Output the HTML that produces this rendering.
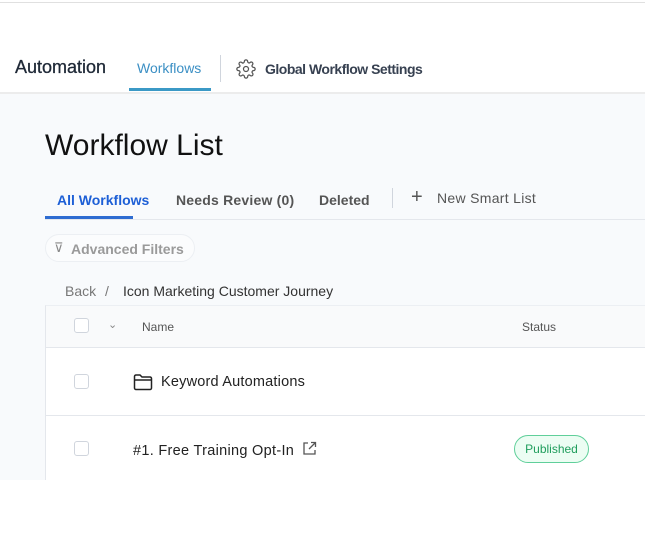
<!DOCTYPE html>
<html><head><style>
*{margin:0;padding:0;box-sizing:border-box}
body{width:645px;height:555px;background:#fff;font-family:"Liberation Sans",sans-serif;position:relative;overflow:hidden}
.a{position:absolute;white-space:nowrap}
.cb{position:absolute;width:15px;height:15px;border:1px solid #d0d5dd;border-radius:3px;background:#fff}
</style></head><body>
<div class="a" style="left:0;top:2px;width:645px;height:1px;background:#e0e0e0"></div>
<div class="a" style="left:0;top:93px;width:645px;height:387px;background:#f8fafc"></div>
<div class="a" style="left:0;top:92px;width:645px;height:2px;background:#ececec"></div>
<div class="a" style="left:15px;top:57px;font-size:18px;color:#1f2937;-webkit-text-stroke:0.3px #1f2937">Automation</div>
<div class="a" style="left:137px;top:60px;font-size:14px;color:#3b8fc4">Workflows</div>
<div class="a" style="left:129px;top:88px;width:82px;height:3px;background:#3b99c6"></div>
<div class="a" style="left:220px;top:55px;width:1px;height:27px;background:#d0d5dd"></div>
<svg class="a" style="left:236px;top:59px" width="20" height="20" viewBox="0 0 24 24" fill="none" stroke="#555" stroke-width="1.5"><circle cx="12" cy="12" r="3"/><path d="M19.4 15a1.65 1.65 0 0 0 .33 1.820l.06.06a2 2 0 1 1-2.830 2.830l-.06-.06a1.65 1.65 0 0 0-1.820-.33 1.65 1.65 0 0 0-1 1.510V21a2 2 0 1 1-4 0v-.09A1.65 1.65 0 0 0 9 19.4a1.65 1.65 0 0 0-1.820.33l-.06.06a2 2 0 1 1-2.830-2.830l.06-.06A1.65 1.65 0 0 0 4.680 15a1.65 1.65 0 0 0-1.510-1H3a2 2 0 1 1 0-4h.09A1.65 1.65 0 0 0 4.6 9a1.65 1.65 0 0 0-.33-1.820l-.06-.06a2 2 0 1 1 2.830-2.830l.06.06A1.65 1.65 0 0 0 9 4.680a1.65 1.65 0 0 0 1-1.510V3a2 2 0 1 1 4 0v.09a1.65 1.65 0 0 0 1 1.510 1.65 1.65 0 0 0 1.820-.33l.06-.06a2 2 0 1 1 2.830 2.830l-.06.06A1.65 1.65 0 0 0 19.4 9a1.65 1.65 0 0 0 1.510 1H21a2 2 0 1 1 0 4h-.09a1.65 1.65 0 0 0-1.510 1z"/></svg>
<div class="a" style="left:265px;top:61px;font-size:14px;color:#374151;font-weight:bold;letter-spacing:-0.5px">Global Workflow Settings</div>
<div class="a" style="left:45px;top:129px;font-size:30px;color:#111">Workflow List</div>
<div class="a" style="left:57px;top:192px;font-size:14px;font-weight:bold;color:#1d5fd6">All Workflows</div>
<div class="a" style="left:176px;top:192px;font-size:14px;font-weight:bold;color:#555;letter-spacing:0.2px">Needs Review (0)</div>
<div class="a" style="left:319px;top:192px;font-size:14px;font-weight:bold;color:#555">Deleted</div>
<div class="a" style="left:392px;top:188px;width:1px;height:20px;background:#d0d5dd"></div>
<div class="a" style="left:411px;top:186px;font-size:20px;color:#555">+</div>
<div class="a" style="left:437px;top:190px;font-size:14px;color:#555;letter-spacing:0.3px">New Smart List</div>
<div class="a" style="left:45px;top:219px;width:600px;height:1px;background:#e4e7ec"></div>
<div class="a" style="left:45px;top:216px;width:88px;height:3px;background:#2e6cd1"></div>
<div class="a" style="left:45px;top:234px;width:150px;height:28px;border:1px solid #eceff3;border-radius:14px;background:#fbfcfd"></div>
<div class="a" style="left:54px;top:240px;font-size:13px;color:#888">⊽</div>
<div class="a" style="left:71px;top:241px;font-size:14px;font-weight:bold;color:#9a9a9a">Advanced Filters</div>
<div class="a" style="left:65px;top:283px;font-size:14px;color:#777">Back</div>
<div class="a" style="left:105px;top:283px;font-size:14px;color:#777">/</div>
<div class="a" style="left:123px;top:283px;font-size:14px;color:#333">Icon Marketing Customer Journey</div>
<div class="a" style="left:45px;top:305px;width:600px;height:175px;background:#fff;border-left:1px solid #e4e7ec;border-top:1px solid #eceff3"></div>
<div class="a" style="left:46px;top:306px;width:599px;height:42px;background:#f9fafb;border-bottom:1px solid #e4e7ec"></div>
<div class="cb" style="left:74px;top:318px"></div>
<div class="a" style="left:108px;top:318px;font-size:11px;color:#888">⌄</div>
<div class="a" style="left:142px;top:320px;font-size:12px;color:#555">Name</div>
<div class="a" style="left:522px;top:320px;font-size:12px;color:#555">Status</div>
<div class="cb" style="left:74px;top:374px"></div>
<svg class="a" style="left:133px;top:373px" width="20" height="18" viewBox="0 0 20 18" fill="none" stroke="#222" stroke-width="1.5"><path d="M1.5 3.5a1.5 1.5 0 0 1 1.5-1.5h4l2 2h8a1.5 1.5 0 0 1 1.5 1.5v9.5a1.5 1.5 0 0 1-1.5 1.5H3a1.5 1.5 0 0 1-1.5-1.5z M1.5 7h17"/></svg>
<div class="a" style="left:161px;top:374px;font-size:14.5px;color:#222;letter-spacing:0.2px">Keyword Automations</div>
<div class="a" style="left:46px;top:415px;width:599px;height:1px;background:#e4e7ec"></div>
<div class="cb" style="left:74px;top:441px"></div>
<div class="a" style="left:133px;top:443px;font-size:14.5px;color:#222;letter-spacing:0.3px">#1. Free Training Opt-In</div>
<svg class="a" style="left:302px;top:441px" width="15" height="15" viewBox="0 0 15 15" fill="none" stroke="#555" stroke-width="1.3"><path d="M6 2H2v11h11V9 M9 1.5h4.5V6 M13.5 1.5L7 8"/></svg>
<div class="a" style="left:514px;top:435px;width:75px;height:28px;border:1px solid #5fcf9a;border-radius:14px;background:#ecfdf3;color:#1f9d5c;font-size:12px;text-align:center;line-height:26px">Published</div>
</body></html>
